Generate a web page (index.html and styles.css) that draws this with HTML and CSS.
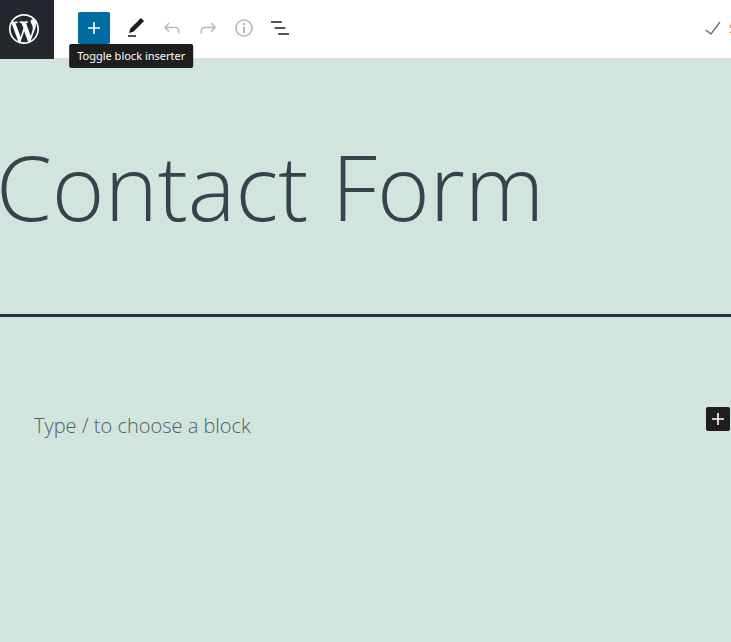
FILE: index.html
```html
<!DOCTYPE html>
<html lang="en">

<head>
  <meta charset="UTF-8">
  <meta name="viewport" content="width=device-width, initial-scale=1.0">
  <title>Contact Form</title>
  <link rel="stylesheet" href="styles.css">
</head>

<body>

  <header class="header">
    <a class="logo" href="#" aria-label="View pages">
      <svg width="36" height="36" viewBox="-2 -2 24 24"><path d="M20 10c0-5.51-4.49-10-10-10C4.48 0 0 4.49 0 10c0 5.52 4.48 10 10 10 5.51 0 10-4.48 10-10zM7.78 15.37L4.37 6.22c.55-.02 1.17-.08 1.17-.08.5-.06.44-1.13-.06-1.11 0 0-1.45.11-2.37.11-.18 0-.37 0-.58-.01C4.12 2.69 6.87 1.11 10 1.11c2.33 0 4.45.87 6.05 2.34-.68-.11-1.65.39-1.65 1.58 0 .74.45 1.36.9 2.1.35.61.55 1.36.55 2.46 0 1.49-1.4 5-1.4 5l-3.03-8.37c.54-.02.82-.17.82-.17.5-.05.44-1.25-.06-1.22 0 0-1.44.12-2.38.12-.87 0-2.33-.12-2.33-.12-.5-.03-.56 1.2-.06 1.22l.92.08 1.26 3.41zM17.41 10c.24-.64.74-1.87.43-4.25.7 1.29 1.05 2.71 1.05 4.25 0 3.29-1.73 6.24-4.4 7.78.97-2.59 1.94-5.2 2.92-7.78zM6.1 18.09C3.12 16.65 1.11 13.53 1.11 10c0-1.3.23-2.48.72-3.59C3.25 10.3 4.67 14.2 6.1 18.09zm4.03-6.63l2.58 6.98c-.86.29-1.76.45-2.71.45-.79 0-1.57-.11-2.29-.33.81-2.38 1.62-4.74 2.42-7.1z"/></svg>
    </a>

    <div class="toolbar">
      <div class="inserter">
        <button class="btn primary" type="button" aria-labelledby="tip">
          <svg width="24" height="24" viewBox="0 0 24 24"><path d="M18 11.2h-5.2V6h-1.6v5.2H6v1.6h5.2V18h1.6v-5.2H18z"/></svg>
        </button>
        <div class="tooltip" id="tip" role="tooltip">Toggle block inserter</div>
      </div>
      <button class="btn" type="button" aria-label="Tools">
        <svg width="24" height="24" viewBox="0 0 24 24"><path d="M20.1 5.1L16.9 2 6.2 12.7l-1.3 4.4 4.5-1.3L20.1 5.1zM4 20.8h8v-1.5H4v1.5z"/></svg>
      </button>
      <button class="btn" type="button" aria-label="Undo" disabled>
        <svg width="24" height="24" viewBox="0 0 24 24"><path d="M18.3 11.7c-.6-.6-1.4-.9-2.3-.9H6.7l2.9-3.3-1.1-1-4.5 5L8.5 16l1-1-2.7-2.7H16c.5 0 .9.2 1.3.5 1 1 1 3.4 1 4.5v.3h1.5v-.2c0-1.5 0-4.3-1.5-5.7z"/></svg>
      </button>
      <button class="btn" type="button" aria-label="Redo" disabled>
        <svg width="24" height="24" viewBox="0 0 24 24"><path d="M15.6 6.5l-1.1 1 2.9 3.3H8c-.9 0-1.7.3-2.3.9-1.4 1.5-1.4 4.2-1.4 5.6v.2h1.5v-.3c0-1.1 0-3.5 1-4.5.3-.3.7-.5 1.3-.5h9.2L14.5 15l1.1 1.1 4.6-4.6-4.6-5z"/></svg>
      </button>
      <button class="btn" type="button" aria-label="Details" disabled>
        <svg width="24" height="24" viewBox="0 0 24 24"><path d="M12 3.2c-4.8 0-8.8 3.9-8.8 8.8 0 4.8 3.9 8.8 8.8 8.8 4.8 0 8.8-3.9 8.8-8.8 0-4.8-4-8.8-8.8-8.8zm0 16c-4 0-7.2-3.3-7.2-7.2C4.8 8 8 4.8 12 4.8s7.2 3.3 7.2 7.2c0 4-3.2 7.2-7.2 7.2zM11 17h2v-6h-2v6zm0-8h2V7h-2v2z"/></svg>
      </button>
      <button class="btn" type="button" aria-label="List view">
        <svg width="24" height="24" viewBox="0 0 24 24"><path d="M13.8 5.2H3v1.5h10.8V5.2zm-3.6 12v1.5H21v-1.5H10.2zm7.2-6H6.6v1.5h10.8v-1.5z"/></svg>
      </button>
    </div>

    <div class="saved">
      <svg width="24" height="24" viewBox="0 0 24 24"><path d="M18.3 5.6L9.9 16.9l-4.6-3.4-.9 1.2 5.8 4.3 9.3-12.6z"/></svg>
      <span class="saved-text">Saved</span>
    </div>
  </header>

  <main class="editor">
    <h1 class="title">Contact Form</h1>
    <div class="block">
      <input class="paragraph" type="text" placeholder="Type / to choose a block" aria-label="Empty block">
      <button class="add" type="button" aria-label="Add block">
        <svg width="24" height="24" viewBox="0 0 24 24"><path d="M18 11.2h-5.2V6h-1.6v5.2H6v1.6h5.2V18h1.6v-5.2H18z"/></svg>
      </button>
    </div>
  </main>

</body>

</html>
```

FILE: styles.css
```css
* {
  box-sizing: border-box;
}

body {
  margin: 0;
  min-height: 100vh;
  background-color: #d1e4dd;
  font-family: "Open Sans", "Noto Sans", sans-serif;
  overflow-x: hidden;
}

svg {
  display: block;
  flex: none;
  fill: currentColor;
}

button {
  padding: 0;
  border: 0;
  border-radius: 2px;
  display: flex;
  align-items: center;
  justify-content: center;
  cursor: pointer;
}

.header {
  display: flex;
  background-color: #fff;
}

.logo {
  width: 54px;
  height: 59px;
  padding: 0 0 2px 6px;
  display: flex;
  align-items: center;
  background-color: #23282e;
  color: #fff;
}

.toolbar {
  flex: 1;
  display: flex;
  align-items: center;
  gap: 4px;
  padding: 0 24px 2px;
  border-bottom: 1px solid #dce2e0;
}

.btn {
  width: 32px;
  height: 32px;
  background-color: transparent;
  color: #1e1e1e;
}

.btn:disabled {
  color: #b8b8b8;
  cursor: default;
}

.btn.primary {
  background-color: #006ba1;
  color: #fff;
}

.inserter {
  position: relative;
  margin-right: 6px;
}

.tooltip {
  position: absolute;
  top: 100%;
  left: 50%;
  transform: translateX(-20%);
  padding: 4px 8px;
  border-radius: 2px;
  background-color: #1e1e1e;
  color: #fff;
  font-family: "Noto Sans", sans-serif;
  font-size: 11px;
  line-height: 16px;
  white-space: nowrap;
}

.saved {
  width: 30px;
  display: flex;
  align-items: center;
  gap: 4px;
  padding-bottom: 2px;
  border-bottom: 1px solid #dce2e0;
  color: #757575;
  overflow: hidden;
}

.saved-text {
  color: #c98a3c;
  font-size: 13px;
}

.title {
  margin: 0;
  padding: 64px 0;
  border-bottom: 3px solid #28303d;
  color: #39414d;
  font-size: 90px;
  font-weight: 300;
  line-height: 127px;
  text-indent: -4px;
}

.block {
  display: flex;
  align-items: flex-start;
  padding: 90px 1px 0 34px;
}

.paragraph {
  flex: 1;
  min-width: 0;
  height: 36px;
  padding: 0;
  border: 0;
  outline: none;
  background-color: transparent;
  color: #28303d;
  font-family: inherit;
  font-size: 20px;
  font-weight: 300;
}

.paragraph::placeholder {
  color: #526064;
  opacity: 1;
}

.add {
  width: 24px;
  height: 24px;
  background-color: #1e1e1e;
  color: #fff;
}
```
